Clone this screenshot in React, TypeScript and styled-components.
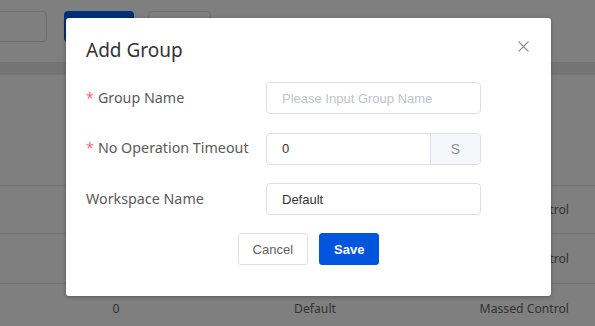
import { FC } from 'react';
import styled, { createGlobalStyle } from 'styled-components';

const GlobalStyle = createGlobalStyle`
    html, body {
        margin: 0;
        padding: 0;
        background: #ffffff;
        overflow: hidden;
    }
    body {
        font-family: "Noto Sans", "Open Sans", sans-serif;
    }
`;

const uiFont = `"Noto Sans", "Open Sans", sans-serif`;
const inputFont = `"Liberation Sans", Arial, sans-serif`;

const Page = styled.div`
    width: 595px;
    height: 326px;
    position: relative;
    overflow: hidden;
    background: #ffffff;
`;

const Toolbar = styled.div`
    display: flex;
    align-items: center;
    gap: 14px;
    padding-top: 11px;
    height: 31px;
`;

const GhostButton = styled.div<{ $width: number; $shift?: number }>`
    width: ${p => p.$width}px;
    height: 31px;
    box-sizing: border-box;
    border: 1px solid #dcdfe6;
    border-radius: 4px;
    margin-left: ${p => p.$shift ?? 0}px;
`;

const PrimaryGhost = styled.div`
    width: 70px;
    height: 31px;
    border-radius: 4px;
    background: #0060f0;
    margin-left: 3px;
`;

const Band = styled.div`
    margin-top: 20px;
    height: 13px;
    background: #e8e8e8;
`;

const TableRow = styled.div<{ $height: number }>`
    height: ${p => p.$height}px;
    border-bottom: 1px solid #e6e6e6;
    display: grid;
    grid-template-columns: 232px 166px 171px;
    align-items: center;
    font-family: ${uiFont};
    font-size: 12.2px;
    color: #666666;
`;

const HeadCell = styled.span`
    align-self: end;
    padding-bottom: 10px;
    font-size: 13.5px;
    font-weight: 600;
    color: #555555;
    margin-left: -40px;
`;

const Cell = styled.span<{ $align?: string }>`
    text-align: ${p => p.$align ?? 'center'};
    white-space: nowrap;
`;

const Overlay = styled.div`
    position: absolute;
    inset: 0;
    background: rgba(0, 0, 0, 0.5);
    padding: 18px 0 0 66px;
`;

const Dialog = styled.div`
    width: 485px;
    height: 278px;
    box-sizing: border-box;
    background: #ffffff;
    border-radius: 3px;
    box-shadow: 0 1px 4px rgba(0, 0, 0, 0.3);
    padding: 20px 20px 0 20px;
    display: flex;
    flex-direction: column;
`;

const Header = styled.div`
    display: flex;
    justify-content: space-between;
    align-items: center;
    height: 24px;
`;

const Title = styled.h2`
    margin: 0;
    font-family: ${uiFont};
    font-size: 19px;
    font-weight: 400;
    color: #333333;
`;

const Close = styled.svg`
    width: 11px;
    height: 11px;
    margin-right: 2px;
    margin-top: -8px;
`;

const Form = styled.div`
    margin-top: 20px;
    display: flex;
    flex-direction: column;
    gap: 18.5px;
`;

const Row = styled.div`
    display: flex;
    align-items: center;
    height: 32px;
`;

const Label = styled.label`
    width: 180px;
    font-family: ${uiFont};
    font-size: 14.3px;
    color: #5a5a5a;
    white-space: nowrap;
    margin-top: -2px;
`;

const Star = styled.span`
    color: #f56c6c;
    margin-right: 4px;
`;

const Field = styled.div`
    width: 215px;
    height: 32px;
    box-sizing: border-box;
    border: 1px solid #dcdfe6;
    border-radius: 4px;
    display: flex;
    overflow: hidden;
`;

const Input = styled.input`
    flex: 1;
    min-width: 0;
    border: none;
    outline: none;
    padding: 0 0 0 15px;
    font-family: ${inputFont};
    font-size: 13px;
    color: #333333;
    background: transparent;
    &::placeholder {
        color: #c0c4cc;
    }
`;

const Addon = styled.div`
    width: 49px;
    background: #f5f7fa;
    border-left: 1px solid #dcdfe6;
    display: flex;
    align-items: center;
    justify-content: center;
    font-family: ${inputFont};
    font-size: 14px;
    color: #909399;
`;

const Footer = styled.div`
    display: flex;
    justify-content: center;
    gap: 11px;
    margin-top: 18px;
`;

const Button = styled.button<{ $primary?: boolean }>`
    height: 32px;
    box-sizing: border-box;
    padding: 0 14px;
    border-radius: 3px;
    border: 1px solid ${p => (p.$primary ? '#0055dd' : '#dcdfe6')};
    background: ${p => (p.$primary ? '#0055dd' : '#ffffff')};
    color: ${p => (p.$primary ? '#ffffff' : '#606266')};
    font-family: ${inputFont};
    font-size: 13px;
    font-weight: ${p => (p.$primary ? 700 : 400)};
`;

const App: FC = () => {
    return <Page>
        <GlobalStyle/>
        <Toolbar>
            <GhostButton $width={67} $shift={-20}/>
            <PrimaryGhost/>
            <GhostButton $width={63}/>
        </Toolbar>
        <Band/>
        <TableRow $height={110}>
            <HeadCell>Name</HeadCell>
        </TableRow>
        <TableRow $height={47}>
            <Cell/>
            <Cell/>
            <Cell $align={'right'}>Massed Control</Cell>
        </TableRow>
        <TableRow $height={49}>
            <Cell/>
            <Cell/>
            <Cell $align={'right'}>Massed Control</Cell>
        </TableRow>
        <TableRow $height={49}>
            <Cell>0</Cell>
            <Cell>Default</Cell>
            <Cell $align={'right'}>Massed Control</Cell>
        </TableRow>

        <Overlay>
            <Dialog>
                <Header>
                    <Title>Add Group</Title>
                    <Close viewBox="0 0 11 11">
                        <path d="M0.5 0.5 L10.5 10.5 M10.5 0.5 L0.5 10.5" stroke="#909399" strokeWidth="1.1" fill="none"/>
                    </Close>
                </Header>
                <Form>
                    <Row>
                        <Label><Star>*</Star>Group Name</Label>
                        <Field><Input placeholder={'Please Input Group Name'}/></Field>
                    </Row>
                    <Row>
                        <Label><Star>*</Star>No Operation Timeout</Label>
                        <Field>
                            <Input defaultValue={'0'}/>
                            <Addon>S</Addon>
                        </Field>
                    </Row>
                    <Row>
                        <Label>Workspace Name</Label>
                        <Field><Input defaultValue={'Default'}/></Field>
                    </Row>
                </Form>
                <Footer>
                    <Button>Cancel</Button>
                    <Button $primary>Save</Button>
                </Footer>
            </Dialog>
        </Overlay>
    </Page>;
};

export default App;
